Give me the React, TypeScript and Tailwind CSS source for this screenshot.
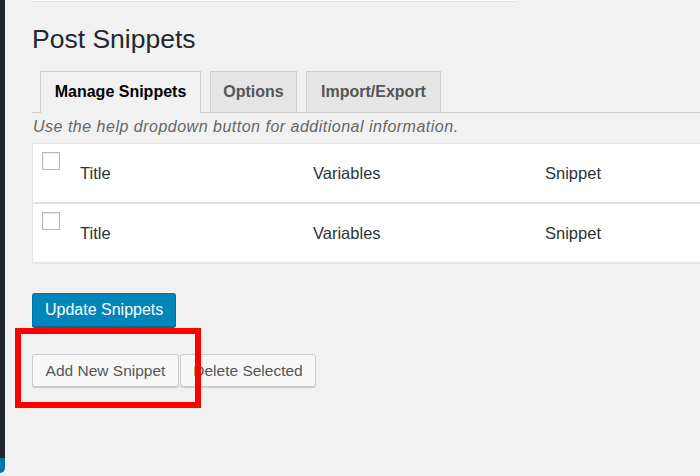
import React from 'react';

const tabs = [
  { label: 'Manage Snippets', width: 'w-[161px]', active: true },
  { label: 'Options', width: 'w-[87px]', active: false },
  { label: 'Import/Export', width: 'w-[135px]', active: false },
];

const rows = [0, 1];

function SnippetRow({ first }: { first: boolean }) {
  return (
    <div
      className={
        first
          ? 'flex h-[59px] border-b border-[#e1e1e1]'
          : 'flex h-[59px] border-t border-[#e1e1e1]'
      }
    >
      <div className="w-[47px] shrink-0 pl-[9px] pt-[8px]">
        <span className="block h-[18px] w-[18px] border border-[#b4b9be] bg-white shadow-[inset_0_1px_2px_rgba(0,0,0,0.1)]" />
      </div>
      <div className="flex w-[233px] shrink-0 items-center pt-px text-[16.5px]">Title</div>
      <div className="flex w-[232px] shrink-0 items-center pt-px text-[16.5px]">Variables</div>
      <div className="flex flex-1 items-center pt-px text-[16.5px]">Snippet</div>
    </div>
  );
}

export default function App() {
  return (
    <div className="flex h-[476px] w-[700px] overflow-hidden bg-[#f1f1f1] font-['Liberation_Sans',Arial,sans-serif] text-[#2c3338]">
      <aside className="flex w-[5px] shrink-0 flex-col">
        <div className="flex-1 bg-[#23282d]" />
        <div className="h-[15px] rounded-br-[5px] bg-[#0073aa]" />
        <div className="h-[3px]" />
      </aside>

      <main className="relative flex-1 pl-[27px]">
        <div className="h-[2px] w-[485px] border-b border-[#e2e2e2] bg-[#fafafa]" />

        <h1 className="mt-[21px] text-[26.5px] font-normal leading-[32px] text-[#23282d]">
          Post Snippets
        </h1>

        <nav className="mt-[16px] flex h-[42px] items-end gap-[9px] border-b border-[#ccc] pl-[8px]">
          {tabs.map((tab) => (
            <div
              key={tab.label}
              className={
                tab.active
                  ? `${tab.width} -mb-px flex h-[42px] items-center justify-center border border-b-0 border-[#ccc] bg-[#f1f1f1] pb-px text-[16px] font-bold text-black`
                  : `${tab.width} flex h-[41px] items-center justify-center border border-b-0 border-[#ccc] bg-[#e5e5e5] text-[16px] font-bold text-[#555]`
              }
            >
              {tab.label}
            </div>
          ))}
        </nav>

        <p className="mt-[4px] pl-px text-[16px] italic leading-[20px] tracking-[0.5px] text-[#666]">
          Use the help dropdown button for additional information.
        </p>

        <div className="mt-[6px] border border-r-0 border-[#e5e5e5] bg-white shadow-[0_1px_1px_rgba(0,0,0,0.04)]">
          {rows.map((r) => (
            <SnippetRow key={r} first={r === 0} />
          ))}
        </div>

        <button className="mt-[30px] flex h-[34px] items-center rounded-[3px] border border-[#0073aa] border-b-[#006799] bg-[#0085ba] px-[12px] text-[16px] text-white shadow-[0_1px_0_#006799]">
          Update Snippets
        </button>

        <div className="mt-[27px] flex gap-px">
          <button className="flex h-[33px] w-[147px] items-center justify-center rounded-[3px] border border-[#ccc] bg-[#f7f7f7] text-[15.5px] text-[#555] shadow-[0_1px_0_#ccc]">
            Add New Snippet
          </button>
          <button className="flex h-[33px] w-[136px] items-center justify-center rounded-[3px] border border-[#ccc] bg-[#f7f7f7] text-[15.5px] text-[#555] shadow-[0_1px_0_#ccc]">
            Delete Selected
          </button>
        </div>

        {/* red highlight drawn over the screenshot */}
        <div className="absolute left-[10px] top-[328px] h-[80px] w-[186px] border-[6px] border-[#ff0000]" />
      </main>
    </div>
  );
}
